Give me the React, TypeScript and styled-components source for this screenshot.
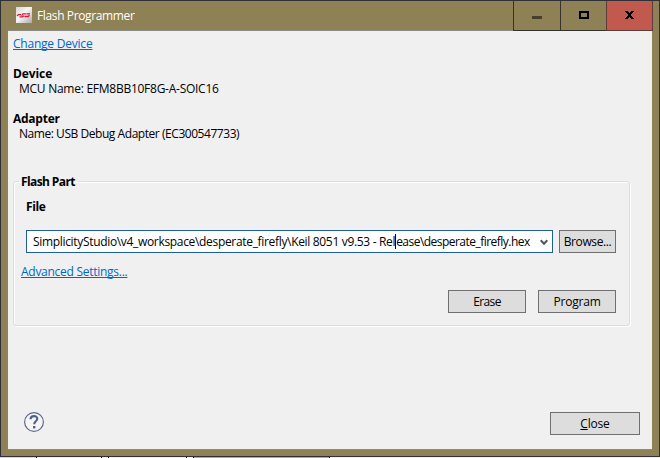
import React from "react";
import styled, { createGlobalStyle, css } from "styled-components";

const GlobalStyle = createGlobalStyle`
  * { box-sizing: border-box; }
  body { margin: 0; overflow: hidden; }
`;

const Screen = styled.div`
  width: 660px;
  height: 458px;
  display: flex;
  flex-direction: column;
  font: 12px/15px "Open Sans", "Noto Sans", sans-serif;
  color: #000;
  white-space: nowrap;
`;

const Window = styled.div`
  height: 457px;
  display: flex;
  flex-direction: column;
  padding: 0 7px 6px;
  background: #8e8156;
  border: 1px solid #303036;
`;

const TitleBar = styled.header`
  height: 30px;
  display: flex;
  flex: none;
  border-bottom: 1px solid #8c8c86;
`;

const AppIcon = styled.svg`
  width: 16px;
  height: 16px;
  margin: 6px 5px 0 8px;
`;

const Label = styled.span<{ $spacing?: number }>`
  letter-spacing: ${(p) => p.$spacing ?? -0.2}px;
`;

const Title = styled(Label)`
  flex: 1;
  margin-top: 7px;
  color: #fff;
`;

const WindowControls = styled.div`
  display: flex;
  height: 30px;
  margin-right: -1px;
`;

const ControlButton = styled.button<{ $width: number; $danger?: boolean }>`
  width: ${(p) => p.$width}px;
  height: 30px;
  padding: 0;
  border: solid #35332d;
  border-width: 0 0 1px 1px;
  background: #8e8156;
  ${(p) =>
    p.$danger &&
    css`
      background: #c2594f;
      border-color: #5d3b39;
      border-right-width: 1px;
    `}
  svg { display: block; }
`;

const Content = styled.main`
  flex: 1;
  display: flex;
  flex-direction: column;
  background: #f0f0f0;
  border-bottom: 1px solid #8c8c86;
  padding: 5px 12px 14px 5px;
`;

const Link = styled.a<{ $spacing: number }>`
  display: block;
  align-self: flex-start;
  height: 15px;
  color: #0066cc;
  letter-spacing: ${(p) => p.$spacing}px;
  text-decoration: underline 1px;
  text-underline-offset: 1px;
  text-decoration-skip-ink: none;
`;

const Info = styled.section`
  display: flex;
  flex-direction: column;
  height: 45px;
`;

const InfoList = styled.div`
  margin-top: 15px;
`;

const Heading = styled.strong<{ $spacing: number }>`
  font-weight: 700;
  letter-spacing: ${(p) => p.$spacing}px;
`;

const Detail = styled(Label)`
  padding-left: 6px;
`;

const Group = styled.fieldset`
  width: 617px;
  height: 152px;
  margin: 18px 0 0;
  padding: 0 13px 0 7px;
  min-width: 0;
  border: 1px solid #d5dfe5;
  border-radius: 3px;
  box-shadow: 1px 1px 0 #fff, inset 1px 1px 0 #fff;
`;

const Legend = styled.legend`
  padding: 0 3px 0 2px;
  margin-left: -2px;
  height: 15px;
`;

const FileHeading = styled(Heading)`
  display: block;
  margin: 10px 0 0 5px;
`;

const FileRow = styled.div`
  display: flex;
  gap: 6px;
  margin: 16px 0 11px 5px;
`;

const Combo = styled.div`
  width: 527px;
  height: 23px;
  display: flex;
  align-items: center;
  padding-left: 6px;
  background: #fff;
  border: 1px solid #1f5f98;
`;

const Caret = styled.i`
  width: 1px;
  height: 15px;
  background: #000;
`;

const ComboArrow = styled.svg`
  width: 8px;
  height: 7px;
  margin: 2px 4px 0 auto;
`;

const PushButton = styled.button<{ $width: number; $spacing?: number }>`
  width: ${(p) => p.$width}px;
  height: 23px;
  flex: none;
  padding: 0;
  border: 1px solid #707070;
  background: #dddddd;
  color: #000;
  font: inherit;
  letter-spacing: ${(p) => p.$spacing ?? -0.2}px;
`;

const Actions = styled.div`
  display: flex;
  justify-content: flex-end;
  gap: 12px;
  margin-top: 11px;
`;

const Footer = styled.footer`
  display: flex;
  justify-content: space-between;
  align-items: center;
  margin-top: auto;
  padding-left: 10px;
`;

const HelpIcon = styled.svg`
  width: 22px;
  height: 22px;
  margin-bottom: 2px;
`;

const Backdrop = styled.div`
  height: 1px;
  background: linear-gradient(90deg, #d8d8d8 36px, #000 36px 37px, #eee 37px 101px, #000 101px 102px, #eee 102px 108px, #000 108px 109px, #eee 109px 186px, #000 186px 187px, #eee 187px 193px, #000 193px 194px, #aaa 194px 329px, #000 329px 330px, #f0f0f0 330px);
`;

export default function App() {
  return (
    <Screen>
      <GlobalStyle />
      <Window>
        <TitleBar>
          <AppIcon viewBox="0 0 16 16">
            <defs>
              <linearGradient id="tile" x1="0" y1="0" x2="1" y2="1">
                <stop offset="0" stopColor="#d6d6d6" />
                <stop offset=".45" stopColor="#f6f6f6" />
                <stop offset="1" stopColor="#aaa" />
              </linearGradient>
            </defs>
            <rect width="16" height="16" fill="url(#tile)" />
            <path d="M1 8.700L2.500 7.700H5M3.500 9.800H6.500L8 8.700M5.500 8.600L7 6.900H10M8.500 9.500H12L13.500 8.200M10.500 6.900H14" fill="none" stroke="#db1731" strokeWidth="1.300" />
          </AppIcon>
          <Title $spacing={-0.37}>Flash Programmer</Title>
          <WindowControls>
            <ControlButton $width={47} aria-label="Minimize">
              <svg width="46" height="29"><path d="M18 15h10v3h-10z" fill="#45402b" /></svg>
            </ControlButton>
            <ControlButton $width={46} aria-label="Maximize">
              <svg width="45" height="29"><path d="M19 11h8v6h-8z" fill="none" stroke="#000" strokeWidth="2" /></svg>
            </ControlButton>
            <ControlButton $width={47} $danger aria-label="Close window">
              <svg width="45" height="29">
                <path d="M18 10h3v1h1v1h1v-1h1v-1h3v1h-1v1h-1v1h-1v2h1v1h1v1h1v1h-3v-1h-1v-1h-1v1h-1v1h-3v-1h1v-1h1v-1h1v-2h-1v-1h-1v-1h-1z" fill="#000" />
              </svg>
            </ControlButton>
          </WindowControls>
        </TitleBar>
        <Content>
          <Link $spacing={-0.22}>Change Device</Link>
          <InfoList>
            <Info>
              <Heading $spacing={-0.1}>Device</Heading>
              <Detail $spacing={-0.26}>MCU Name: EFM8BB10F8G-A-SOIC16</Detail>
            </Info>
            <Info>
              <Heading $spacing={-0.25}>Adapter</Heading>
              <Detail $spacing={-0.45}>Name: USB Debug Adapter (EC300547733)</Detail>
            </Info>
          </InfoList>
          <Group>
            <Legend><Heading $spacing={-0.6}>Flash Part</Heading></Legend>
            <FileHeading $spacing={-0.4}>File</FileHeading>
            <FileRow>
              <Combo>
                <Label $spacing={-0.325}>SimplicityStudio\v4_workspace\desperate_firefly\Keil 8051 v9.53 - Rel</Label>
                <Caret />
                <Label $spacing={-0.53}>ease\desperate_firefly.hex</Label>
                <ComboArrow viewBox="0 0 8 7"><path d="M.7 1.300L4 4.700 7.300 1.300" fill="none" stroke="#555" strokeWidth="2" /></ComboArrow>
              </Combo>
              <PushButton $width={57} $spacing={-0.4}>Browse...</PushButton>
            </FileRow>
            <Link as="span" $spacing={-0.27}>Advanced Settings...</Link>
            <Actions>
              <PushButton $width={78} $spacing={-0.6}>Erase</PushButton>
              <PushButton $width={78}>Program</PushButton>
            </Actions>
          </Group>
          <Footer>
            <HelpIcon viewBox="0 0 22 22">
              <circle cx="11" cy="11" r="9.400" fill="#f5f5f5" stroke="#5d6b8c" strokeWidth="1.200" />
              <path d="M7.500 8.300C7.700 4 14.500 4.200 14.300 7.800C14.200 10.300 11.200 10.200 11.200 13.200" fill="none" stroke="#4c608b" strokeWidth="2.100" />
              <rect x="10" y="15" width="2.400" height="2.400" fill="#4c608b" />
            </HelpIcon>
            <PushButton $width={90}><u>C</u>lose</PushButton>
          </Footer>
        </Content>
      </Window>
      <Backdrop />
    </Screen>
  );
}
